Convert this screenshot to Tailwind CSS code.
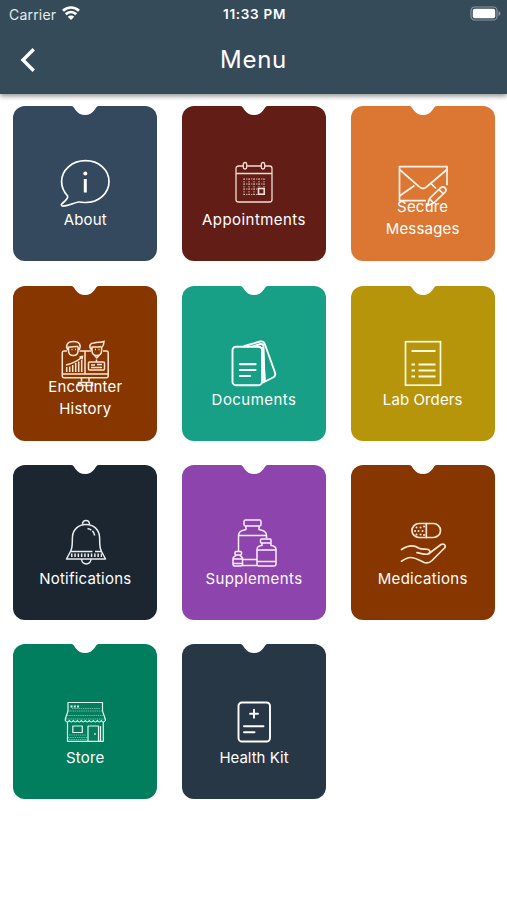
<!DOCTYPE html>
<html lang="en">
<head>
  <meta charset="UTF-8" />
  <meta name="viewport" content="width=device-width, initial-scale=1" />
  <title>Menu</title>
  <script src="https://cdn.jsdelivr.net/npm/@tailwindcss/browser@4"></script>
</head>
<body class="min-h-screen bg-white text-white overflow-hidden font-['Inter','Liberation_Sans',sans-serif]">

  <!-- Header -->
  <header class="relative h-[94px] bg-[#364b5a] shadow-[0_2px_5px_rgba(0,0,0,0.45)]">
    <div class="grid grid-cols-3 items-center h-7 pl-[9px] pr-[6px] text-[14px]">
      <div class="flex items-center gap-[6px] tracking-[0.2px] text-[#e6eaed]">
        <span>Carrier</span>
        <svg class="w-[18px] h-[14px] -mt-[2px]" viewBox="0 0 18 14" fill="none" stroke="#fff" stroke-width="2.7">
          <path d="M1 4.8a11.3 11.3 0 0 1 16 0M3.800 8.200a7.300 7.300 0 0 1 10.400 0" />
          <path d="M9 14 5.800 10.800a4.500 4.500 0 0 1 6.400 0z" fill="#fff" stroke="none" />
        </svg>
      </div>
      <div class="text-center font-semibold text-[13.5px] tracking-[0.7px] -ml-[1px] whitespace-nowrap">11:33 PM</div>
      <svg class="w-[31px] h-[15px] justify-self-end -mt-[1px]" viewBox="0 0 31 15">
        <rect x="1" y="1" width="26" height="13" rx="3.6" fill="none" stroke="#8b969f" stroke-width="1.2" />
        <rect x="2.8" y="2.8" width="22.4" height="9.4" rx="2" fill="#fff" />
        <path d="M28.5 5v5c1.2-.5 1.9-1.4 1.9-2.5s-.7-2-1.9-2.5z" fill="#8b969f" />
      </svg>
    </div>
    <div class="grid grid-cols-3 items-center h-16 px-5">
      <svg class="w-4 h-6" viewBox="0 0 16 24" fill="none" stroke="#fff" stroke-width="3.4"><path d="M13.7 1.3 3 12l10.7 10.7" /></svg>
      <h1 class="text-center text-[24px] tracking-[0.7px]">Menu</h1>
    </div>
  </header>

  <!-- Menu tiles -->
  <main class="grid grid-cols-[repeat(3,144px)] gap-x-[24.7px] gap-y-[24.4px] pl-[13.3px] pt-[12.2px] text-[15px] leading-[22px] text-center">

    <a class="relative flex flex-col items-center h-[155px] pt-[53px] rounded-[12px] bg-[#34495e]">
      <svg class="absolute top-[-1px] w-[28px] h-[11px]" viewBox="0 0 28 11" fill="#fff"><path d="M0 0h28v1C25.500 1 25 3 23.500 5 21.500 8 18 10 14 10S6.500 8 4.500 5C3 3 2.500 1 0 1z" /></svg>
      <svg class="w-[50px] h-[50px]" viewBox="0 0 50 50" fill="none" stroke="#fff" stroke-width="1.700" stroke-linejoin="round">
        <path d="M25.500 1.700C39 1.700 49 11 49 22.500S39 43.500 25.500 43.500c-3 0-4.500-.6-7-.5-5 .8-10 4.500-16 4-1.500-.3-1.300-1.600-.4-2.400C5 42 8.500 39.500 7.600 37 3.500 32.500 1.600 28 1.600 22.500 1.600 11 12 1.700 25.500 1.700z" />
        <path d="M25.300 20v13.500" stroke-width="3" />
        <circle cx="25.300" cy="14.500" r="2" fill="#fff" stroke="none" />
      </svg>
      <span class="tracking-[0.2px]">About</span>
    </a>

    <a class="relative flex flex-col items-center h-[155px] pt-[53px] rounded-[12px] bg-[#621e16]">
      <svg class="absolute top-[-1px] w-[28px] h-[11px]" viewBox="0 0 28 11" fill="#fff"><path d="M0 0h28v1C25.500 1 25 3 23.500 5 21.500 8 18 10 14 10S6.500 8 4.500 5C3 3 2.500 1 0 1z" /></svg>
      <svg class="w-[50px] h-[50px]" viewBox="0 0 50 50" fill="none" stroke="#f3dcd3" stroke-width="1.300">
        <path d="M14 7h-4.500a2.500 2.500 0 0 0-2.500 2.500v31A2.500 2.500 0 0 0 9.500 43h31a2.500 2.500 0 0 0 2.500-2.500v-31A2.500 2.500 0 0 0 40.500 7H36M18 7h14M7 14.500h36" />
        <rect x="14.300" y="3.500" width="3.400" height="6.500" rx="1.700" />
        <rect x="32.300" y="3.500" width="3.400" height="6.500" rx="1.700" />
        <path d="M14.500 20h21M14.500 25h21M14.500 30h14M14.500 35.500h14M15 19.500v16.500M20 19.500v16.500M25 19.500v16.500M30 19.500v9M35 19.500v9" stroke-width=".9" stroke-dasharray="1.500 1" opacity=".8" />
        <rect x="29.500" y="29.500" width="5.700" height="5.700" stroke-width="1.600" />
      </svg>
      <span class="tracking-[0.45px]">Appointments</span>
    </a>

    <a class="relative flex flex-col items-center h-[155px] pt-[53px] rounded-[12px] bg-[#dc7633]">
      <svg class="absolute top-[-1px] w-[28px] h-[11px]" viewBox="0 0 28 11" fill="#fff"><path d="M0 0h28v1C25.500 1 25 3 23.500 5 21.500 8 18 10 14 10S6.500 8 4.500 5C3 3 2.500 1 0 1z" /></svg>
      <svg class="w-[50px] h-[50px] shrink-0" viewBox="0 0 50 50" fill="none" stroke="#fff3ea" stroke-width="1.700">
        <path d="M28 41.700H1.500V7.700h47.500v18.500" />
        <path d="M1.500 10.500 21 27.500q4 4 8 0L49 10.500M1.500 37 16.500 26.500M33 24.500l5 5" />
        <path d="M31.500 39.500 43 28.500q2-1.500 4 .3 2 2 .3 4L35.500 44.300l-6 2.200zM41 30.500l4.500 4.500M31.500 39.500l4 4.800" />
      </svg>
      <span class="w-[90px] tracking-[0.2px] -mt-[13px]">Secure Messages</span>
    </a>

    <a class="relative flex flex-col items-center h-[155px] pt-[53px] rounded-[12px] bg-[#873600]">
      <svg class="absolute top-[-1px] w-[28px] h-[11px]" viewBox="0 0 28 11" fill="#fff"><path d="M0 0h28v1C25.500 1 25 3 23.500 5 21.500 8 18 10 14 10S6.500 8 4.500 5C3 3 2.500 1 0 1z" /></svg>
      <svg class="w-[50px] h-[50px] shrink-0" viewBox="0 0 50 50" fill="none" stroke="#fbe6d8" stroke-width="1.500">
        <path d="M7 12H4a1.700 1.700 0 0 0-1.700 1.700V37A1.700 1.700 0 0 0 4 38.700h42.500a1.700 1.700 0 0 0 1.700-1.700V13.700a1.700 1.700 0 0 0-1.700-1.700H43M19.500 12H31M2.500 35h45.500M25 12v23" />
        <path d="M8.500 7.500v4c0 3 2 5 4.800 5s4.800-2 4.800-5v-4M8 11c-3-4-1-8.500 5.500-8.500s8 4 5.500 8.500M8.500 8c3 .5 6-1 9.500-.5" />
        <path d="M32 7.500v4c0 3 2 5 4.800 5s4.800-2 4.800-5v-4M31.500 11c-3.500-4.500-1-7 2.500-7 3-1.500 7 0 10-1.500 0 3-1 5-2.500 6.500M32 8c3 0 6 .5 9-.5M34.500 16.500l2.300 2.500 2.300-2.500" />
        <path d="M11.500 10.500h1M15 10.500h1M35 10.500h1M38.500 10.500h1" />
        <path d="M6 26c7-1.500 12-4 16.500-8.500M19.500 18l3-.5-.5 3" />
        <path d="M6.700 28v5M9.700 27.500v5.500M12.700 26v7M15.700 24v9M18.700 22.500v10.500M21.700 21v12" />
        <rect x="28.500" y="23" width="16" height="8" rx="1" /><path d="M31 26h4M31 28.500h11M37 25.500h5M36.500 20.500v2.500" />
        <path d="M21.500 39v3.500M29 39v3.500M18.500 46.500v-3h14v3z" />
      </svg>
      <span class="w-[90px] tracking-[0.2px] -mt-[13px]">Encounter History</span>
    </a>

    <a class="relative flex flex-col items-center h-[155px] pt-[53px] rounded-[12px] bg-[#17a085]">
      <svg class="absolute top-[-1px] w-[28px] h-[11px]" viewBox="0 0 28 11" fill="#fff"><path d="M0 0h28v1C25.500 1 25 3 23.500 5 21.500 8 18 10 14 10S6.500 8 4.500 5C3 3 2.500 1 0 1z" /></svg>
      <svg class="w-[50px] h-[50px]" viewBox="0 0 50 50" fill="none" stroke="#fff" stroke-width="1.900" stroke-linecap="round" stroke-linejoin="round">
        <rect x="3.500" y="7.700" width="29.500" height="38.500" rx="3.500" />
        <path d="M15.500 7 31 2.500q3.500-.8 4.800 2.500l10 28q1.500 4-1.800 5.500L34 43.500" />
        <path d="M24 7.300 31.500 5q2.500-.5 3 2l1 35" />
        <path d="M33.500 9l2 33" stroke-width="2.500" />
        <path d="M11 25.200h15.500M11 31h15.500M11 37h10" stroke-width="2.200" />
      </svg>
      <span class="tracking-[0.45px]">Documents</span>
    </a>

    <a class="relative flex flex-col items-center h-[155px] pt-[53px] rounded-[12px] bg-[#b7950b]">
      <svg class="absolute top-[-1px] w-[28px] h-[11px]" viewBox="0 0 28 11" fill="#fff"><path d="M0 0h28v1C25.500 1 25 3 23.500 5 21.500 8 18 10 14 10S6.500 8 4.500 5C3 3 2.500 1 0 1z" /></svg>
      <svg class="w-[50px] h-[50px]" viewBox="0 0 50 50" fill="none" stroke="#fff9df" stroke-width="1.700">
        <rect x="7.500" y="2.700" width="35" height="43.500" />
        <path d="M13.500 12h24M20.500 25.500h17M20.500 31.500h17M20.500 37.500h17M13.500 25.500h3.500M13.500 31.500h3.500M13.500 37.500h3.500" stroke-width="2" />
      </svg>
      <span class="tracking-[0.1px]">Lab Orders</span>
    </a>

    <a class="relative flex flex-col items-center h-[155px] pt-[53px] rounded-[12px] bg-[#1b2631]">
      <svg class="absolute top-[-1px] w-[28px] h-[11px]" viewBox="0 0 28 11" fill="#fff"><path d="M0 0h28v1C25.500 1 25 3 23.500 5 21.500 8 18 10 14 10S6.500 8 4.500 5C3 3 2.500 1 0 1z" /></svg>
      <svg class="w-[50px] h-[50px]" viewBox="0 0 50 50" fill="none" stroke="#e9edf1" stroke-width="1.500" stroke-linejoin="round">
        <path d="M22.500 6.500c0-5.500 7-5.500 7 0" />
        <path d="M10.500 33.500C13 29 12 24 12.500 18.500 13 11.500 18.500 6.500 26 6.500s13 5 13.500 12c.5 5.500-.5 10.500 2 15" />
        <path d="M32.500 33.500h-22l-4 7.500h39l-4-7.500H35" />
        <path d="M11 37.300h31" stroke-width="3.500" stroke-dasharray="1.500 1.800" />
        <path d="M21.500 41c0 6.500 9.500 6.500 9.500 0" />
        <path d="M27.500 10.500c4 .8 6.500 3 7.200 7" stroke-dasharray="4 1.500 10" />
      </svg>
      <span class="tracking-[0.2px]">Notifications</span>
    </a>

    <a class="relative flex flex-col items-center h-[155px] pt-[53px] rounded-[12px] bg-[#8e44ad]">
      <svg class="absolute top-[-1px] w-[28px] h-[11px]" viewBox="0 0 28 11" fill="#fff"><path d="M0 0h28v1C25.500 1 25 3 23.500 5 21.500 8 18 10 14 10S6.500 8 4.500 5C3 3 2.500 1 0 1z" /></svg>
      <svg class="w-[50px] h-[50px]" viewBox="0 0 50 50" fill="none" stroke="#fbeeff" stroke-width="1.500" stroke-linejoin="round">
        <rect x="15" y="2" width="17" height="6" rx="1.500" />
        <path d="M17 8v3.500c-5 .8-7.500 2.500-7.500 6V33M30 8v3.500c5 .8 7.500 2.500 7.500 6v2.500M9.500 17.500h28M13.500 41.500h14.500M13.500 47.500h14.500" />
        <rect x="31.500" y="21" width="10.500" height="4" rx="1" />
        <path d="M33 25v2.500c-3.500.3-5 1.500-5 4V46q0 2 2 2h15q2 0 2-2V31.500c0-2.500-1.500-3.700-5-4V25M28 32h19M28 43.500h19" />
        <rect x="6" y="33.500" width="6.500" height="3.500" rx="1" />
        <path d="M7 37c0 1.500-3 1.500-3 3.500V46.500q0 1.500 1.500 1.500h6.500q1.500 0 1.500-1.500v-6c0-2-2.500-2-2.500-3.500M4 41h9.500M4 45.500h9.500" />
      </svg>
      <span class="tracking-[0.4px]">Supplements</span>
    </a>

    <a class="relative flex flex-col items-center h-[155px] pt-[53px] rounded-[12px] bg-[#873600]">
      <svg class="absolute top-[-1px] w-[28px] h-[11px]" viewBox="0 0 28 11" fill="#fff"><path d="M0 0h28v1C25.500 1 25 3 23.500 5 21.500 8 18 10 14 10S6.500 8 4.500 5C3 3 2.500 1 0 1z" /></svg>
      <svg class="w-[50px] h-[50px]" viewBox="0 0 50 50" fill="none" stroke="#fbe6d8" stroke-width="1.700" stroke-linecap="round" stroke-linejoin="round">
        <rect x="14" y="5.500" width="28.500" height="14" rx="7" />
        <path d="M28.300 5.500v14" />
        <path d="M18.500 9.500h.1M22.500 9.500h.1M26 8.500h.1M17 13h.1M20.500 13h.1M24.500 13h.1M18.500 16.500h.1M22.500 16.500h.1M26 17h.1" stroke-width="1.900" />
        <path d="M3.500 31.500c7-4.500 12-5 17-1.500 3.500 2 7 .5 10 1.500 2.500 1.500 1.500 4.500-1 4.700-4 .3-7-1-10.500-1.500" />
        <path d="M31 35.500 43 26.500c3-1.500 5.500 1 3.500 3.500L34 42.500c-3 3-6 3-9 1.500-4-2-8-4.500-12.500-4.500-3.500 0-6.500 2-9 3.700" />
      </svg>
      <span class="tracking-[0.3px]">Medications</span>
    </a>

    <a class="relative flex flex-col items-center h-[155px] pt-[53px] rounded-[12px] bg-[#007e5d]">
      <svg class="absolute top-[-1px] w-[28px] h-[11px]" viewBox="0 0 28 11" fill="#fff"><path d="M0 0h28v1C25.500 1 25 3 23.500 5 21.500 8 18 10 14 10S6.500 8 4.500 5C3 3 2.500 1 0 1z" /></svg>
      <svg class="w-[50px] h-[50px]" viewBox="0 0 50 50" fill="none" stroke="#e3f7f0" stroke-width="1.200" stroke-linejoin="round">
        <path d="M8 14V5.500h34.500V14" />
        <path d="M10.500 9.500h8.500" stroke-width="2" stroke-dasharray="2 1.300" />
        <path d="M8 14 5.300 22v1.500q2 3 4 0 2 3 4 0 2 3 4 0 2 3 4 0 2 3 4 0 2 3 4 0 2 3 4 0 2 3 4 0 2 3 4 0 2 3 4 0V22L42.500 14" />
        <path d="M8 14h34.500M7 18.500h36.500M6 22h39M12 11.500h28" stroke-width=".8" stroke-dasharray="1.500 .7" opacity=".6" />
        <path d="M7.500 25v19.300h35.800V25" />
        <path d="M8 40.500h19.500M9 38h17M9 42.500h18" stroke-width=".8" stroke-dasharray="1.500 .7" opacity=".6" />
        <rect x="12.800" y="29" width="9.500" height="6.500" />
        <path d="M28 44V29h10.500v15M40.500 29v15M35 36v2" />
      </svg>
      <span class="tracking-[0.2px]">Store</span>
    </a>

    <a class="relative flex flex-col items-center h-[155px] pt-[53px] rounded-[12px] bg-[#273746]">
      <svg class="absolute top-[-1px] w-[28px] h-[11px]" viewBox="0 0 28 11" fill="#fff"><path d="M0 0h28v1C25.500 1 25 3 23.500 5 21.500 8 18 10 14 10S6.500 8 4.500 5C3 3 2.500 1 0 1z" /></svg>
      <svg class="w-[50px] h-[50px]" viewBox="0 0 50 50" fill="none" stroke="#fff" stroke-width="1.900" stroke-linecap="round">
        <rect x="9.500" y="5.500" width="31.500" height="39" rx="3.500" />
        <path d="M25 12.700v8M21 16.700h8M15 29.300h19.500M15 35.300h10.500" />
      </svg>
      <span>Health Kit</span>
    </a>

  </main>
</body>
</html>
